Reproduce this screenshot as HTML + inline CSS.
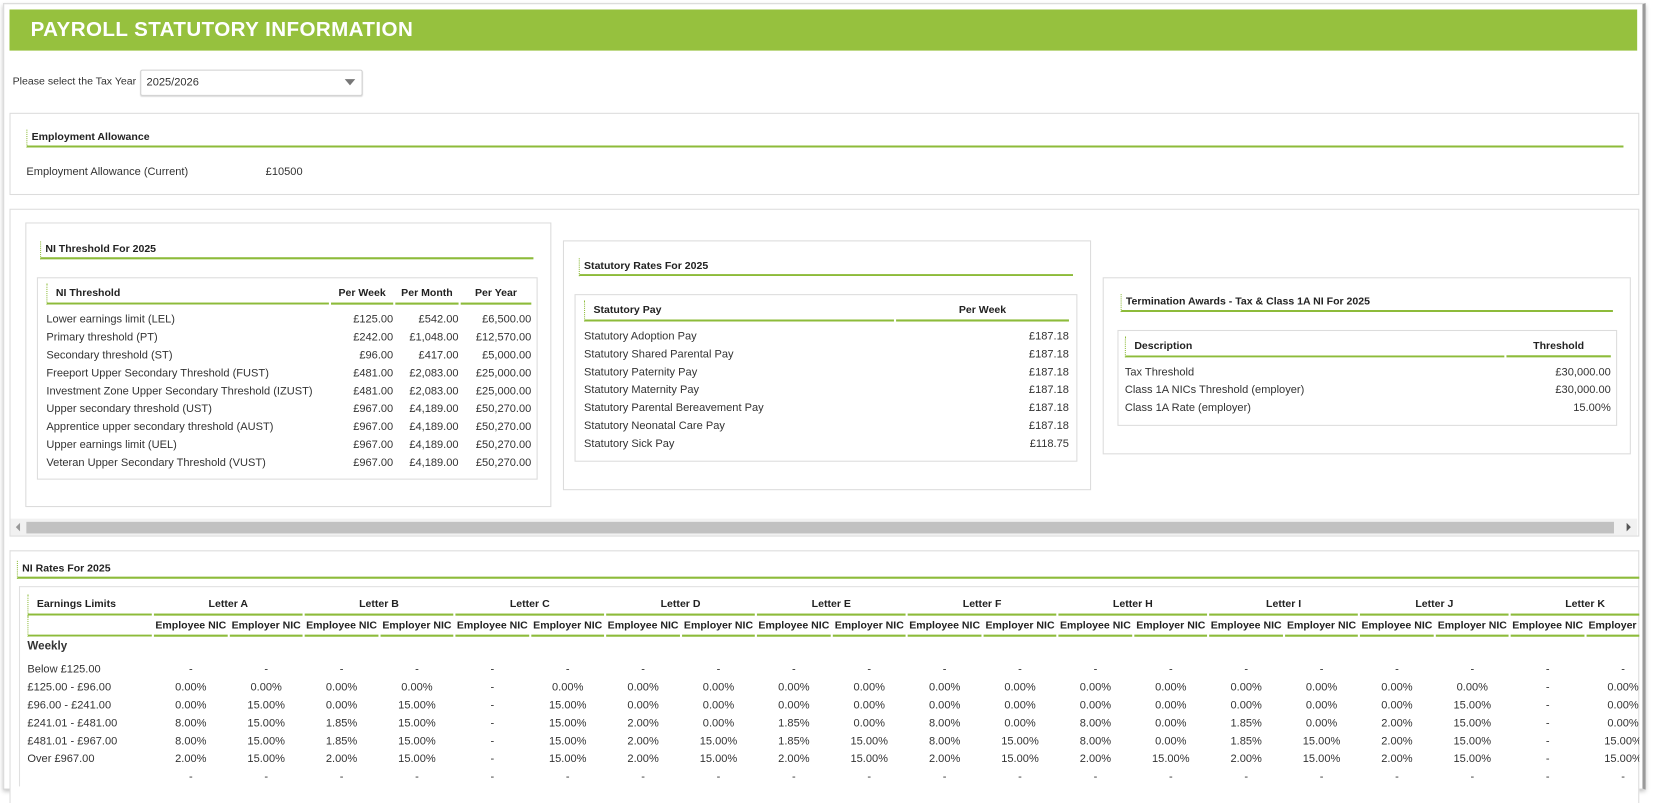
<!DOCTYPE html>
<html><head><meta charset="utf-8"><style>
*{box-sizing:border-box;margin:0;padding:0}
html,body{width:1653px;height:792px;overflow:hidden;background:#fff}
#s{position:absolute;left:0;top:0;width:1568px;height:752px;transform:scale(1.0542);transform-origin:0 0;font-family:"Liberation Sans",sans-serif;font-size:10.5px;color:#333}
.a{position:absolute}
.box{position:absolute;border:1px solid #dcdcdc;background:#fff}
.ttl{position:absolute;font-weight:bold;font-size:10px;color:#222;border-left:1px dotted #8dbb3a;padding-left:4px;height:17px;line-height:15px;border-bottom:2px solid #8dbb3a}
table{position:absolute;border-collapse:separate;border-spacing:2px 0;table-layout:fixed}
th{font-weight:bold;font-size:10px;color:#222;height:20px;border-bottom:2px solid #8dbb3a;vertical-align:middle;white-space:nowrap;overflow:hidden}
td{height:17px;white-space:nowrap;overflow:hidden}
.r{text-align:right}.c{text-align:center}.l{text-align:left}
th.dl{border-left:1px dotted #8dbb3a;padding-left:8px}
tr.sp td{height:5px}
</style></head><body><div id="s">
<div class="a" style="left:3px;top:3px;width:1558px;height:746px;border:1px solid #d6d6d6;border-right:3px solid #9a9a9a;box-shadow:0 2px 4px rgba(0,0,0,.25)"></div>
<div class="a" style="left:9px;top:9px;width:1544px;height:39px;background:#96c13e"></div>
<div class="a" style="left:29px;top:15px;font-size:19.5px;font-weight:bold;color:#fff;letter-spacing:0.4px;line-height:26px">PAYROLL STATUTORY INFORMATION</div>
<div class="a" style="left:12px;top:72px;font-size:10px">Please select the Tax Year</div>
<div class="a" style="left:133px;top:66px;width:211px;height:25px;border:1px solid #cfcfcf;border-radius:2px;box-shadow:0 1px 1px #ddd;padding:5px 0 0 5px;font-size:10.5px">2025/2026</div>
<div class="a" style="left:327px;top:75px;width:0;height:0;border-left:5px solid transparent;border-right:5px solid transparent;border-top:6px solid #777"></div>

<div class="box" style="left:9px;top:107px;width:1546px;height:78px"></div>
<div class="ttl" style="left:25px;top:123px;width:1515px">Employment Allowance</div>
<div class="a" style="left:25px;top:157px">Employment Allowance (Current)</div>
<div class="a" style="left:252px;top:157px">£10500</div>

<div class="box" style="left:9px;top:198px;width:1546px;height:311px"></div>
<div class="a" style="left:10px;top:492px;width:1543px;height:16px;background:#f1f1f1"></div>
<div class="a" style="left:25px;top:495px;width:1506px;height:11px;background:#c1c1c1"></div>
<div class="a" style="left:15px;top:496px;border-top:4px solid transparent;border-bottom:4px solid transparent;border-right:4px solid #999"></div>
<div class="a" style="left:1543px;top:496px;border-top:4px solid transparent;border-bottom:4px solid transparent;border-left:4px solid #555"></div>

<div class="box" style="left:24px;top:211px;width:499px;height:270px"></div>
<div class="ttl" style="left:38px;top:229px;width:468px">NI Threshold For 2025</div>
<div class="box" style="left:35px;top:263px;width:475px;height:192px"></div>
<table style="left:42px;top:269px;width:462px">
<colgroup><col style="width:268px"><col style="width:59px"><col style="width:60px"><col style="width:67px"></colgroup>
<tr><th class="l dl">NI Threshold</th><th class="c">Per Week</th><th class="c">Per Month</th><th class="c">Per Year</th></tr>
<tr class="sp"><td></td><td></td><td></td><td></td></tr>
<tr><td>Lower earnings limit (LEL)</td><td class="r">£125.00</td><td class="r">£542.00</td><td class="r">£6,500.00</td></tr>
<tr><td>Primary threshold (PT)</td><td class="r">£242.00</td><td class="r">£1,048.00</td><td class="r">£12,570.00</td></tr>
<tr><td>Secondary threshold (ST)</td><td class="r">£96.00</td><td class="r">£417.00</td><td class="r">£5,000.00</td></tr>
<tr><td>Freeport Upper Secondary Threshold (FUST)</td><td class="r">£481.00</td><td class="r">£2,083.00</td><td class="r">£25,000.00</td></tr>
<tr><td>Investment Zone Upper Secondary Threshold (IZUST)</td><td class="r">£481.00</td><td class="r">£2,083.00</td><td class="r">£25,000.00</td></tr>
<tr><td>Upper secondary threshold (UST)</td><td class="r">£967.00</td><td class="r">£4,189.00</td><td class="r">£50,270.00</td></tr>
<tr><td>Apprentice upper secondary threshold (AUST)</td><td class="r">£967.00</td><td class="r">£4,189.00</td><td class="r">£50,270.00</td></tr>
<tr><td>Upper earnings limit (UEL)</td><td class="r">£967.00</td><td class="r">£4,189.00</td><td class="r">£50,270.00</td></tr>
<tr><td>Veteran Upper Secondary Threshold (VUST)</td><td class="r">£967.00</td><td class="r">£4,189.00</td><td class="r">£50,270.00</td></tr>
</table>

<div class="box" style="left:534px;top:228px;width:501px;height:237px"></div>
<div class="ttl" style="left:549px;top:245px;width:469px">Statutory Rates For 2025</div>
<div class="box" style="left:545px;top:279px;width:477px;height:159px"></div>
<table style="left:552px;top:285px;width:464px">
<colgroup><col style="width:294px"><col style="width:164px"></colgroup>
<tr><th class="l dl">Statutory Pay</th><th class="c">Per Week</th></tr>
<tr class="sp"><td></td><td></td></tr>
<tr><td>Statutory Adoption Pay</td><td class="r">£187.18</td></tr>
<tr><td>Statutory Shared Parental Pay</td><td class="r">£187.18</td></tr>
<tr><td>Statutory Paternity Pay</td><td class="r">£187.18</td></tr>
<tr><td>Statutory Maternity Pay</td><td class="r">£187.18</td></tr>
<tr><td>Statutory Parental Bereavement Pay</td><td class="r">£187.18</td></tr>
<tr><td>Statutory Neonatal Care Pay</td><td class="r">£187.18</td></tr>
<tr><td>Statutory Sick Pay</td><td class="r">£118.75</td></tr>
</table>

<div class="box" style="left:1046px;top:263px;width:501px;height:168px"></div>
<div class="ttl" style="left:1063px;top:279px;width:467px">Termination Awards - Tax &amp; Class 1A NI For 2025</div>
<div class="box" style="left:1060px;top:313px;width:474px;height:91px"></div>
<table style="left:1065px;top:319px;width:465px">
<colgroup><col style="width:360px"><col style="width:99px"></colgroup>
<tr><th class="l dl">Description</th><th class="c">Threshold</th></tr>
<tr class="sp"><td></td><td></td></tr>
<tr><td>Tax Threshold</td><td class="r">£30,000.00</td></tr>
<tr><td>Class 1A NICs Threshold (employer)</td><td class="r">£30,000.00</td></tr>
<tr><td>Class 1A Rate (employer)</td><td class="r">15.00%</td></tr>
</table>

<div class="box" style="left:9px;top:522px;width:1546px;height:240px;border-bottom:none"></div>
<div class="ttl" style="left:16px;top:532px;width:1539px">NI Rates For 2025</div>
<div class="a" style="left:18px;top:556px;width:1537px;height:190px;border:1px solid #e0e0e0;border-right:none;border-bottom:none;overflow:hidden">
<table style="left:5px;top:7px;width:1552px">
<colgroup><col style="width:118px"><col style="width:70px"><col style="width:69px"><col style="width:70px"><col style="width:69px"><col style="width:70px"><col style="width:69px"><col style="width:70px"><col style="width:69px"><col style="width:70px"><col style="width:69px"><col style="width:70px"><col style="width:69px"><col style="width:70px"><col style="width:69px"><col style="width:70px"><col style="width:69px"><col style="width:70px"><col style="width:69px"><col style="width:70px"><col style="width:69px"></colgroup>
<tr><th class="l dl">Earnings Limits</th><th colspan="2">Letter A</th><th colspan="2">Letter B</th><th colspan="2">Letter C</th><th colspan="2">Letter D</th><th colspan="2">Letter E</th><th colspan="2">Letter F</th><th colspan="2">Letter H</th><th colspan="2">Letter I</th><th colspan="2">Letter J</th><th colspan="2">Letter K</th></tr>
<tr><th class="dl"></th><th>Employee NIC</th><th>Employer NIC</th><th>Employee NIC</th><th>Employer NIC</th><th>Employee NIC</th><th>Employer NIC</th><th>Employee NIC</th><th>Employer NIC</th><th>Employee NIC</th><th>Employer NIC</th><th>Employee NIC</th><th>Employer NIC</th><th>Employee NIC</th><th>Employer NIC</th><th>Employee NIC</th><th>Employer NIC</th><th>Employee NIC</th><th>Employer NIC</th><th>Employee NIC</th><th>Employer NIC</th></tr>
<tr><td style="height:22px;vertical-align:top;padding-top:3px;font-weight:bold;font-size:11px">Weekly</td><td colspan="20"></td></tr>
<tr class="c"><td class="l">Below £125.00</td><td>-</td><td>-</td><td>-</td><td>-</td><td>-</td><td>-</td><td>-</td><td>-</td><td>-</td><td>-</td><td>-</td><td>-</td><td>-</td><td>-</td><td>-</td><td>-</td><td>-</td><td>-</td><td>-</td><td>-</td></tr>
<tr class="c"><td class="l">£125.00 - £96.00</td><td>0.00%</td><td>0.00%</td><td>0.00%</td><td>0.00%</td><td>-</td><td>0.00%</td><td>0.00%</td><td>0.00%</td><td>0.00%</td><td>0.00%</td><td>0.00%</td><td>0.00%</td><td>0.00%</td><td>0.00%</td><td>0.00%</td><td>0.00%</td><td>0.00%</td><td>0.00%</td><td>-</td><td>0.00%</td></tr>
<tr class="c"><td class="l">£96.00 - £241.00</td><td>0.00%</td><td>15.00%</td><td>0.00%</td><td>15.00%</td><td>-</td><td>15.00%</td><td>0.00%</td><td>0.00%</td><td>0.00%</td><td>0.00%</td><td>0.00%</td><td>0.00%</td><td>0.00%</td><td>0.00%</td><td>0.00%</td><td>0.00%</td><td>0.00%</td><td>15.00%</td><td>-</td><td>0.00%</td></tr>
<tr class="c"><td class="l">£241.01 - £481.00</td><td>8.00%</td><td>15.00%</td><td>1.85%</td><td>15.00%</td><td>-</td><td>15.00%</td><td>2.00%</td><td>0.00%</td><td>1.85%</td><td>0.00%</td><td>8.00%</td><td>0.00%</td><td>8.00%</td><td>0.00%</td><td>1.85%</td><td>0.00%</td><td>2.00%</td><td>15.00%</td><td>-</td><td>0.00%</td></tr>
<tr class="c"><td class="l">£481.01 - £967.00</td><td>8.00%</td><td>15.00%</td><td>1.85%</td><td>15.00%</td><td>-</td><td>15.00%</td><td>2.00%</td><td>15.00%</td><td>1.85%</td><td>15.00%</td><td>8.00%</td><td>15.00%</td><td>8.00%</td><td>0.00%</td><td>1.85%</td><td>15.00%</td><td>2.00%</td><td>15.00%</td><td>-</td><td>15.00%</td></tr>
<tr class="c"><td class="l">Over £967.00</td><td>2.00%</td><td>15.00%</td><td>2.00%</td><td>15.00%</td><td>-</td><td>15.00%</td><td>2.00%</td><td>15.00%</td><td>2.00%</td><td>15.00%</td><td>2.00%</td><td>15.00%</td><td>2.00%</td><td>15.00%</td><td>2.00%</td><td>15.00%</td><td>2.00%</td><td>15.00%</td><td>-</td><td>15.00%</td></tr>
<tr class="c"><td class="l"></td><td>-</td><td>-</td><td>-</td><td>-</td><td>-</td><td>-</td><td>-</td><td>-</td><td>-</td><td>-</td><td>-</td><td>-</td><td>-</td><td>-</td><td>-</td><td>-</td><td>-</td><td>-</td><td>-</td><td>-</td></tr>
</table>
</div>
</div></body></html>
